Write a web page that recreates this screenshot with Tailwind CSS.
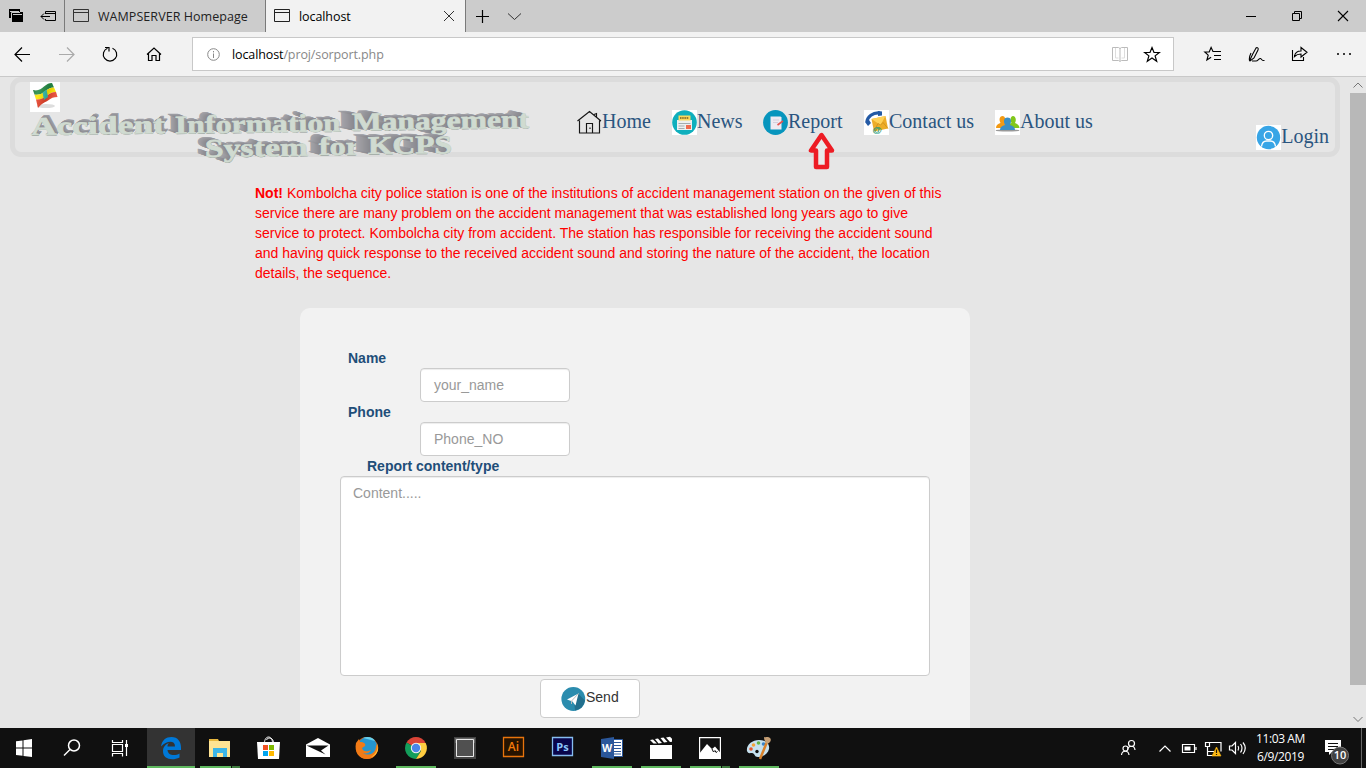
<!DOCTYPE html>
<html lang="en">
<head>
<meta charset="utf-8">
<title>localhost</title>
<script src="https://cdn.jsdelivr.net/npm/@tailwindcss/browser@4"></script>
</head>
<body class="w-[1366px] h-[768px] overflow-hidden bg-[#e6e6e6] font-['Open_Sans','Noto_Sans',sans-serif] text-black">
<div class="flex flex-col w-[1366px] h-[768px]">

  <!-- Tab strip -->
  <div class="flex h-8 shrink-0 bg-[#cccccc]">
    <div class="w-16 shrink-0">
      <svg width="64" height="32" fill="none" stroke="#000">
        <path d="M9 9h11v3h3v10H12v-4H9z" fill="#000" stroke="none"/>
        <path d="M10 11.500h9M13 14.500h9" stroke="#ccc"/><path d="M11.500 18v-5.500H20" stroke="#ccc"/>
        <path d="M45.500 14V11.500H55.500V20.500H45.500V19M45 13.500H55M41 16.500H50M44 13.500L41 16.500L44 19.500"/>
      </svg>
    </div>
    <div class="flex items-center w-[201px] shrink-0 border-l border-[#7a7a7a]">
      <svg class="ml-2 -mt-px" width="16" height="14" fill="none" stroke="#333"><path d="M.5.5h15v12H.5zM0 3.500h16"/></svg>
      <span class="ml-[9px] pt-[2px] text-[12.500px] tracking-[0.060px] whitespace-nowrap text-[#222]">WAMPSERVER Homepage</span>
    </div>
    <div class="flex items-center w-[201px] shrink-0 border-x border-[#7a7a7a] bg-[#f2f2f2]">
      <svg class="ml-2 -mt-px" width="16" height="14" fill="none" stroke="#222"><path d="M.5.5h15v12H.5zM0 3.500h16"/></svg>
      <span class="ml-[9px] pt-[2px] w-[136px] text-[12.500px] tracking-[-0.080px]">localhost</span>
      <svg class="ml-2" width="12" height="12" fill="none" stroke="#333"><path d="M1 1l10 10M11 1L1 11"/></svg>
    </div>
    <svg width="60" height="32" fill="none" stroke="#000"><path d="M10 16.500h13M16.500 10v13" stroke-width="1.200"/><path d="M42 13.500l6.500 6 6.500-6" stroke="#333"/></svg>
    <svg class="ml-auto" width="136" height="32" fill="none" stroke="#000"><path d="M16 16.500h10"/><path d="M62.500 13.500h7v7h-7zM64.500 13.500v-2h7v7h-2"/><path d="M108 11l10 10M118 11l-10 10" stroke-width="1.100"/></svg>
  </div>

  <!-- Address bar -->
  <div class="flex items-center h-11 shrink-0 bg-[#f2f2f2]">
    <svg class="shrink-0" width="192" height="44" fill="none" stroke="#000" stroke-width="1.200">
      <path d="M15 22.500h15M22 15.500l-7 7 7 7"/>
      <path d="M59 22.500h15M67 15.500l7 7-7 7" stroke="#aaa"/>
      <path d="M107.500 16.200A6.700 6.700 0 1 0 112.500 16.200M105 15.500h4v4"/>
      <path d="M147 22.500l7-6.500 7 6.500M148.500 21.500v7h3.500v-5h4v5h3.500v-7"/>
    </svg>
    <div class="flex items-center w-[982px] h-[34px] shrink-0 border border-[#c8c8c8] bg-white">
      <svg class="ml-[14px]" width="13" height="13" fill="none" stroke="#888"><circle cx="6.500" cy="6.500" r="5.800"/><path d="M6.500 5.500v4.500M6.500 3v1.400"/></svg>
      <span class="ml-3 pt-[2px] text-[12.500px] tracking-[-0.110px] text-[#888]"><span class="text-black">localhost</span>/proj/sorport.php</span>
      <svg class="ml-auto" width="62" height="32" fill="none">
        <path d="M1.500 9.500h6l1.500 1 1.500-1h6v13h-6l-1.500 1-1.500-1h-6zM9 10v13" stroke="#bbb"/><path d="M4.500 10v10h3M13.500 10v10h-3" stroke="#ddd"/>
        <path d="M41 9.500l2 5h5.300l-4.200 3.400 1.600 5.300-4.700-3.200-4.700 3.200 1.600-5.300-4.200-3.400H39z" stroke="#000" stroke-width="1.200"/>
      </svg>
    </div>
    <svg class="ml-auto" width="176" height="44" fill="none" stroke="#000">
      <path d="M26 19.500h-3l-1.900-4-1.900 4.500h-4.400l3.400 3.200-1.300 4.800 4.200-2.800M22.500 19.500h8.500M24 23.500h7M24 27.500h7" stroke-width="1.150"/>
      <path d="M60.500 29l3-6.500 3.500-6.500c1-1 3 0 2 2l-4 8-4 3c-1 0-1-4 1-8M63 29h4c2 0 3-3 4.500-2.500s1 2.500 4 2" stroke-width="1.100" transform="translate(-1 0)"/>
      <path d="M102.500 18v10.500h11V25M104.500 24.500c.5-4 3-5.500 6.500-5.500V15.500l6 4.800-6 4.700v-3c-3 0-4.500.5-6.500 2.500z" stroke-width="1.100"/>
      <path d="M147 22h2M153 22h2M159 22h2" stroke-width="1.600"/>
    </svg>
  </div>

  <!-- Page viewport -->
  <div class="flex h-[652px] shrink-0 border-t border-[#c9c9c9]">
    <main class="w-[1350px] shrink-0 flex flex-col">
      <header class="flex ml-2.5 w-[1330px] h-20 shrink-0 rounded-[11px] border-[5px] border-[#dcdcdc]">
        <!-- Site title, extruded lettering -->
        <svg class="shrink-0 overflow-visible" width="530" height="70" viewBox="15 82 530 70" font-family="'Liberation Serif',serif" font-weight="700" font-size="25.500">
          <defs>
            <linearGradient id="flagShade" x2="1" y2=".3"><stop offset="0" stop-color="#000" stop-opacity=".25"/><stop offset=".3" stop-color="#fff" stop-opacity=".1"/><stop offset=".65" stop-color="#000" stop-opacity=".12"/><stop offset="1" stop-color="#fff" stop-opacity=".1"/></linearGradient>
          </defs>
          <path fill="#fff" d="M30 82h30v30H30z"/>
          <ellipse cx="46" cy="106" rx="9" ry="2" fill="#ddd"/>
          <path d="M33 90c5 1.500 8-1 11-3.500s5-3.500 8-3.500l2 4.500c-4 0-6 1.500-9 4s-7 4-10.500 3z" fill="#248b45"/>
          <path d="M34.500 94.500c3.500 1 7-.5 10.500-3s5.500-4 9-4l2 4.500c-4 0-6.500 1.500-9.500 4s-6.500 4-10.500 3.500z" fill="#ffe600"/>
          <path d="M36 99.500c4 .5 7-1 10.500-3.500s5.500-4 9.500-4l1.500 5c-4 0-6.500 1-9.500 3.500-3 2-5.500 2-10 7.500z" fill="#e8442c"/>
          <path d="M42.500 92.500l4-3 1.500 7.500-4 3z" fill="#35bdaa"/>
          <path d="M33 90c5 1.500 8-1 11-3.500s5-3.500 8-3.500l5.500 14c-4 0-6.500 1-9.500 3.500-3 2-5.500 2-10 7.500z" fill="url(#flagShade)"/>
          <g id="wordart">
            <text data-x="3" data-y="-3" transform="translate(31 135) rotate(-.8)" textLength="134" lengthAdjust="spacingAndGlyphs">Accident</text>
            <text data-x="-8" data-y="-3" transform="translate(175 133.500) rotate(-.8)" textLength="166" lengthAdjust="spacingAndGlyphs">Information</text>
            <text data-x="-14" data-y="-3" transform="translate(352 130.500) rotate(-.9)" textLength="177" lengthAdjust="spacingAndGlyphs">Management</text>
            <text data-x="-9" data-y="-3" transform="translate(205 157) rotate(-.8)" textLength="103" lengthAdjust="spacingAndGlyphs">System</text>
            <text data-x="-11" data-y="-3" transform="translate(319 155) rotate(-.6)" textLength="41" lengthAdjust="spacingAndGlyphs">for</text>
            <text data-x="-15" data-y="-3" transform="translate(368 154) rotate(-.5)" textLength="84" lengthAdjust="spacingAndGlyphs">KCPS</text>
          </g>
        </svg>
        <nav class="flex pt-7 font-['Liberation_Serif',serif] text-[20px] leading-[22px] text-[#2a5580]">
          <a class="flex w-[95px] ml-[32px] whitespace-nowrap">
            <svg class="shrink-0" width="25" height="25" fill="none" stroke="#151515" stroke-width="1.150"><path d="M.5 11L12.500 1.500l11.500 9.500M2.500 10.500v12.500h20V10.500M17 4.500l2.500-1V7M9.500 22.500V13.500h6v9M13 17.500v1.500"/></svg>Home</a>
          <a class="flex w-[91px] whitespace-nowrap">
            <svg class="shrink-0" width="25" height="25"><path fill="#fff" d="M0 0h25v25H0z"/><circle cx="12.500" cy="12.500" r="12.300" fill="#0fafbd"/><path fill="#eceff1" d="M5 10h15v10H5z"/><path fill="#fbd85b" d="M6.500 5.500h12v5h-12z"/><path d="M8 8h9" stroke="#735b20" stroke-width="1.500" stroke-dasharray="1.500 .7"/><path d="M6.500 13.500h12M6.500 16h6M6.500 18.500h6" stroke="#a3abb0"/><path fill="#f06a4f" d="M14 15h5v4h-5z"/></svg>News</a>
          <a class="flex w-[101px] whitespace-nowrap">
            <svg class="shrink-0" width="25" height="25"><circle cx="12.500" cy="12.500" r="12.400" fill="#0795bd"/><path fill="#eeeaf2" d="M7.500 6.500h10l1 1v12H7.500z"/><path d="M10 10h6M10 12.500h5" stroke="#d3d0de"/><path d="M14.500 15l5.500-4" stroke="#e65450" stroke-width="1.600"/></svg>Report</a>
          <a class="flex w-[131px] whitespace-nowrap">
            <svg class="shrink-0" width="25" height="25"><path fill="#fff" d="M0 0h25v25H0z"/><path d="M3 12C3 7 9 2 16 3" fill="none" stroke="#245aa5" stroke-width="3.200"/><path d="M1 12l4-2 2 3-3 3zM14 1l4 .5v4l-4 .5z" fill="#245aa5"/><path d="M7.500 9l14-3 2.500 12.500-14 3z" fill="#edad28"/><path d="M7.500 9l9 6 5-9z" fill="#ffd259"/><path d="M10 21.500l4-8 2.500 1.500 2.500-2.500 5 6" fill="none" stroke="#c98a18" stroke-width=".7"/><text x="8.500" y="22.500" font-family="Liberation Sans" font-size="9.500" font-weight="700" fill="#1b9a7c">@</text></svg>Contact us</a>
          <a class="flex whitespace-nowrap">
            <svg class="shrink-0" width="25" height="25"><path fill="#fff" d="M0 0h25v25H0z"/><ellipse cx="12.500" cy="20.500" rx="12" ry="1" fill="#999"/><path fill="#f39a13" d="M1 18c0-3 2-4 4.500-5C3.500 9 5 6 7.500 6S11 9 9.500 13c2 1 3 2 3 5z"/><path fill="#82c71b" d="M12 18c0-3 2-4 4.500-5C14.500 9 16 6 18 6s4 3 2 7c2.500 1 4.500 2 4.500 5z"/><path fill="#3b8fc4" d="M5 20c0-3 2-4 5-5-2-4-1-7.500 2.500-7.500S17 11 15 15c3 1 5 2 5 5z"/></svg>About us</a>
        </nav>
        <a class="flex ml-auto mr-[6px] mt-[43px] font-['Liberation_Serif',serif] text-[20px] leading-[23px] text-[#2a5580]">
          <svg width="25" height="25" fill="none" stroke="#fff" stroke-width="1.300"><path fill="#fff" stroke="none" d="M0 0h25v25H0z"/><circle cx="12.500" cy="12.500" r="11.700" fill="#38a5e6" stroke="none"/><circle cx="12.500" cy="10.500" r="4.200"/><path d="M5.500 21.500c.5-4 3-5.500 5-5.500h4c2 0 4.500 1.500 5 5.500"/></svg>Login</a>
      </header>

      <p class="ml-[255px] mt-[26px] whitespace-nowrap font-['Liberation_Sans',sans-serif] text-sm leading-5 text-[#ff0000]"><b>Not!</b> Kombolcha city police station is one of the institutions of accident management station on the given of this<br>service there are many problem on the accident management that was established long years ago to give<br>service to protect. Kombolcha city from accident. The station has responsible for receiving the accident sound<br>and having quick response to the received accident sound and storing the nature of the accident, the location<br>details, the sequence.</p>

      <form class="flex flex-col ml-[300px] mt-[25px] w-[670px] h-[420px] shrink-0 rounded-t-[10px] bg-[#f2f2f2] px-10 pt-10 font-['Liberation_Sans',sans-serif] text-sm leading-5 text-[#1f4e79]">
        <label class="ml-2 font-bold">Name</label>
        <div class="ml-20 flex items-center w-[150px] h-[34px] rounded border border-[#ccc] bg-white pl-[13px] text-[#999] shadow-[inset_0_1px_1px_rgba(0,0,0,0.075)]">your_name</div>
        <label class="ml-2 font-bold">Phone</label>
        <div class="ml-20 flex items-center w-[150px] h-[34px] rounded border border-[#ccc] bg-white pl-[13px] text-[#999] shadow-[inset_0_1px_1px_rgba(0,0,0,0.075)]">Phone_NO</div>
        <label class="ml-[27px] font-bold">Report content/type</label>
        <div class="h-[200px] rounded border border-[#ccc] bg-white px-3 pt-1.5 text-[#999] shadow-[inset_0_1px_1px_rgba(0,0,0,0.075)]">Content.....</div>
        <div class="ml-[200px] mt-[3px] flex w-[100px] h-[39px] rounded border border-[#ccc] bg-white pl-5 pt-[7px] text-[#333]">
          <svg width="25" height="24"><circle cx="12.300" cy="12" r="11.900" fill="#2b8cae"/><path d="M17 6.500l7 7A12 12 0 0 1 14 23.500l-.5-5z" fill="#226f8d"/><path d="M6 12.500L17.500 6.500 14.500 18.500 11.500 14.500z" fill="#fff"/><path d="M17.500 6.500L10.500 14v3" stroke="#bbb" fill="none"/></svg><span class="leading-5">Send</span>
        </div>
      </form>
    </main>
    <div class="w-4 shrink-0">
      <svg class="block" width="16" height="16" fill="none" stroke="#777"><path d="M3.500 10.500l4.500-4.500 4.500 4.500"/></svg>
      <div class="h-[592px] bg-[#b8b8b8]"></div>
      <svg class="block mt-[26px]" width="16" height="16" fill="none" stroke="#777"><path d="M3.500 6l4.500 4.500L12.500 6"/></svg>
    </div>
  </div>

  <!-- Taskbar -->
  <div class="flex h-10 shrink-0 bg-[#101010]">
    <svg width="48" height="40" fill="#fff"><path d="M16 13.300l6.500-.9v7.200H16zM23.500 12.200l8.500-1.200v8.600h-8.500zM16 20.600h6.500v7.200l-6.500-.9zM23.500 20.600H32v8.500l-8.500-1.100z"/></svg>
    <svg width="48" height="40" fill="none" stroke="#fff" stroke-width="1.500"><circle cx="26" cy="17.500" r="5.500"/><path d="M22 21.500l-6 6"/></svg>
    <svg class="mr-[3px]" width="48" height="40" fill="none" stroke="#fff" stroke-width="1.200"><path d="M16.500 12v2.500h10V12M16.500 16.500h10v7h-10zM16.500 28.500v-3h10v3M30.500 12v16"/><path d="M29 16h3v3h-3z" fill="#fff" stroke="none"/></svg>
    <div class="flex gap-px">
      <svg class="bg-[#333]" width="48" height="40"><path fill="#5fb95f" d="M0 38h48v2H0z"/><path fill="#0078d7" d="M14 18.500C15 12 19 9 24.500 9 31 9 34 14 34 19.500v2.500H20.500c.5 6 8 6 12 3.500v4c-7 3.500-17 2-16.500-7 .3-4 3-6.500 6-7.500-1.500 1.500-1.500 2.500-1.500 3.500h7.500c0-7-9-5.500-14 0z"/></svg>
      <svg width="48" height="40"><path fill="#5fb95f" d="M4 38h31v2H4z"/><path fill="#407d40" d="M36 38h8v2h-8z"/><path fill="#e8b73e" d="M13 11h9l1 2h11v5H13z"/><path fill="#ffe393" d="M13 13h21v16H13z"/><path fill="#3cb4e7" d="M17 20h14v9h-4v-4h-6v4h-4z"/></svg>
      <svg width="48" height="40"><path d="M19.500 15c0-8 8-8 8 0M21.500 12c1-3 7-3 7 3" fill="none" stroke="#fff"/><path fill="#fff" d="M12 14h23l-1 17H13z"/><path fill="#f25022" d="M18 17h5v5h-5z"/><path fill="#7fba00" d="M24 17h5v5h-5z"/><path fill="#00a4ef" d="M18 23h5v5h-5z"/><path fill="#ffb900" d="M24 23h5v5h-5z"/></svg>
      <svg width="48" height="40"><path fill="#fff" d="M12 16.500L24 10l12 6.500V29H12z"/><path fill="#101010" d="M12.500 17.500h22l-7.500 5 4.500 4z"/></svg>
      <svg width="48" height="40"><circle cx="24" cy="20" r="11" fill="#e66000"/><circle cx="24.500" cy="18.500" r="9.500" fill="#2696cf"/><path d="M20 10c4-2 10-1 12 3l-4-1z" fill="#65d0ee"/><path d="M13 15l3-4 1 3c4 0 6 2 5 4l-3 2c1 4 5 4 9 2-1 3-5 4-8 3 6 4 13 0 13-7l1.500-2C36 25 31 31 24 31 16 31 11 24 13 15z" fill="#f27b16"/><path d="M34 14c2 7-1 12-6 15 5-1 8-6 7-11z" fill="#ffc43a"/></svg>
      <svg width="48" height="40"><path fill="#5fb95f" d="M4 38h40v2H4z"/><path d="M24 20L14.500 14.500A11 11 0 0 1 33.500 14.500z" fill="#db4437"/><path d="M24 20L14.500 14.500A11 11 0 0 0 24 31l5-8z" fill="#139e5b"/><path d="M24 15h9.700A11 11 0 0 1 24 31l5-8z" fill="#ffcd40"/><circle cx="24" cy="20" r="5.200" fill="#f1f1f1"/><circle cx="24" cy="20" r="4.200" fill="#4a86e8"/></svg>
      <svg width="48" height="40"><path fill="#444" d="M13 9h22v22H13z"/><path fill="#666" d="M14 10h20v5H14z"/><path d="M15.500 11.500h17v17h-17z" fill="#505050" stroke="#e8e8e8"/></svg>
      <svg width="48" height="40"><path d="M13.500 9.500h20v19h-20z" fill="#261300" stroke="#e8740c" stroke-width="1.300"/><text x="23.500" y="23" text-anchor="middle" font-family="Open Sans" font-weight="600" font-size="12" fill="#f47a0b">Ai</text></svg>
      <svg width="48" height="40"><path d="M13.500 9.500h20v18h-20z" fill="#09054b" stroke="#86bdf0" stroke-width="1.300"/><text x="23.500" y="22.500" text-anchor="middle" font-family="Open Sans" font-weight="700" font-size="11" fill="#8cc6fa">Ps</text></svg>
      <svg width="48" height="40"><path fill="#5fb95f" d="M4 38h40v2H4z"/><path d="M24.500 11.500h10v17h-10z" fill="#fff" stroke="#2b579a"/><path d="M26 14.500h7M26 17.500h7M26 20.500h7M26 23.500h7M26 26h7" stroke="#2b579a"/><path d="M13 11l13-2v22l-13-2z" fill="#2b579a"/><text x="14" y="24" font-family="Open Sans" font-weight="700" font-size="10.500" fill="#fff">W</text></svg>
      <svg width="48" height="40"><path fill="#5fb95f" d="M4 38h40v2H4z"/><path fill="#fff" d="M13 17h22v14H13zM13 12l3-.5 4 4h-3.500zM18 11l3-.5 4 4.500-3.500.5zM23.500 10l3-.5 4 4.500-3.500.5zM29 9.500l4-.8 2 2v3l-2 .3z"/></svg>
      <svg width="48" height="40"><path fill="#5fb95f" d="M4 38h31v2H4z"/><path fill="#407d40" d="M36 38h8v2h-8z"/><path d="M13.600 9.600h20.800v20.800H13.600z" fill="none" stroke="#fff" stroke-width="1.200"/><path d="M13 26l8-10 5 5 3-2.500 6 7V31H13z" fill="#fff"/><path d="M26 21l1.500 3 1.500-1.500 1 2 1.500-1" stroke="#101010" fill="none"/></svg>
      <svg width="48" height="40"><path fill="#5fb95f" d="M4 38h40v2H4z"/><path d="M12 23c-1-6 5-11 12-11s11 4 10 9-6 8-11 8c-4 0-3-4-6-4-2 0-4 1-5-2z" fill="#c6e1ef"/><circle cx="16" cy="21" r="1.800" fill="#e4572e"/><circle cx="18.500" cy="17" r="1.800" fill="#f3a33a"/><circle cx="23.500" cy="15" r="1.800" fill="#62b547"/><circle cx="28.500" cy="16" r="1.800" fill="#3d85c6"/><circle cx="22" cy="23.500" r="1.700" fill="#101010"/><path d="M25 31l7-17" stroke="#d9822b" stroke-width="2.500"/><path d="M29 9c2 1 4-1 6 1s0 5-3 6c-1-2-3-3-3-7z" fill="#c59e74"/></svg>
    </div>
    <svg class="ml-auto" width="134" height="40" fill="none" stroke="#fff" stroke-width="1.200">
      <circle cx="15.500" cy="15.500" r="3"/><path d="M11.500 22c1-5 7-5 7.500 0"/><circle cx="9.500" cy="20.500" r="2.500"/><path d="M5.500 27c.5-5 7-5 7.500 0"/>
      <path d="M43.500 23.500l5.500-5.500 5.500 5.500"/>
      <path d="M66.500 16.500h12v8h-12zM80 19v3"/><path d="M68.500 18.500h6v4h-6z" fill="#fff" stroke="none"/>
      <path d="M89.500 14.500h4v4h-4zM93.500 14.500h11.500v9M91.500 18.500v9h8M92 23.500h6"/><path d="M100.500 19l4.500 9h-9z" fill="#fdb913" stroke="#fdb913" stroke-width=".6"/><path d="M100.500 21.500v3.500M100.500 26v1" stroke="#201500"/>
      <path d="M113.500 18h2.500l3.500-3.500v11L116 22h-2.500zM122 18q1.500 2 0 4.500M124.500 16q3 4 0 8.500M127 14.500q4.500 5.500 0 11.500"/>
    </svg>
    <div class="w-[61px] mr-[13px] pt-[2px] text-center text-[12px] tracking-[-0.400px] leading-[18px] whitespace-nowrap text-white">11:03 AM<br>6/9/2019</div>
    <svg width="42" height="40"><path d="M1 12h16v12H8l-3 3v-3H1z" fill="#fff"/><path d="M4 15.500h10M4 18.500h10M4 21.500h7" stroke="#101010"/><circle cx="16" cy="27.500" r="8.500" fill="#424242" stroke="#777"/><text x="16" y="31" text-anchor="middle" font-family="Open Sans" font-weight="600" font-size="11" fill="#fff">10</text><path d="M37.500 0v40" stroke="#666"/></svg>
  </div>
</div>

<!-- Pointer to the Report entry -->
<svg class="absolute left-[808px] top-[131px]" width="27" height="39"><path d="M13.500 4L3 19.500h5v16.500h11V19.500h5z" fill="#e9e9e9" stroke="#ed1c24" stroke-width="4.500" stroke-linejoin="round"/></svg>

<script>
  // Builds the depth of each title word from shifted copies behind its face.
  const NS = 'http://www.w3.org/2000/svg';
  document.querySelectorAll('#wordart text').forEach((t, n) => {
    t.id = 'word' + n;
    const dx = +t.dataset.x, dy = +t.dataset.y, steps = 14;
    const copy = (x, y, fill, stroke, width) => {
      const u = document.createElementNS(NS, 'use');
      u.setAttribute('href', '#word' + n);
      u.setAttribute('x', x);
      u.setAttribute('y', y);
      u.setAttribute('fill', fill);
      u.setAttribute('stroke', stroke);
      u.setAttribute('stroke-width', width);
      t.parentNode.insertBefore(u, t);
    };
    for (let i = steps; i > 0; i--) {
      const g = 134 + Math.round(i * 2.2);
      copy(dx * i / steps, dy * i / steps, `rgb(${g},${g},${g + 6})`, 'none', 0);
    }
    copy(.4, .7, '#8b958f', 'none', 0);
    copy(0, 0, '#d0dbd1', '#d0dbd1', .7);
  });
  const defs = document.querySelector('defs');
  document.querySelectorAll('#wordart text').forEach(t => defs.appendChild(t));
</script>
</body>
</html>
